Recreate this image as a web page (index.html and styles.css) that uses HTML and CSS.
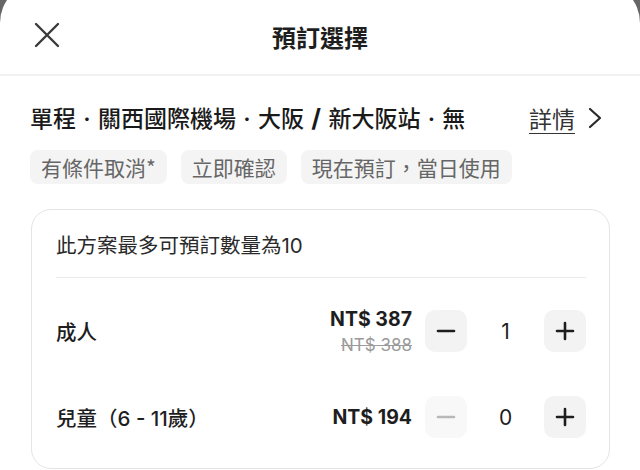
FILE: index.html
```html
<!DOCTYPE html>
<html lang="zh-Hant">
<head>
<meta charset="utf-8">
<link rel="stylesheet" href="styles.css">
</head>
<body>
<div class="sheet">
  <header class="header">
    <button class="close" aria-label="關閉">
      <svg width="26" height="26" viewBox="0 0 26 26"><path d="M2 2 L24 24 M24 2 L2 24" stroke="#3a3a3a" stroke-width="2.4" stroke-linecap="round" fill="none"/></svg>
    </button>
    <h1 class="title">預訂選擇</h1>
  </header>
  <section class="content">
    <div class="route-row">
      <div class="route">單程<span class="sep"> · </span>關西國際機場<span class="sep"> · </span>大阪<span class="sep slash"> / </span>新大阪站<span class="sep"> · </span>無</div>
      <a class="details">詳情<svg class="chev" width="16" height="24" viewBox="0 0 16 24"><path d="M3 3 L13 12 L3 21" stroke="#2a2a2a" stroke-width="2.2" fill="none" stroke-linecap="round" stroke-linejoin="round"/></svg></a>
    </div>
    <div class="tags">
      <span class="tag">有條件取消*</span>
      <span class="tag">立即確認</span>
      <span class="tag">現在預訂，當日使用</span>
    </div>
    <div class="card">
      <div class="notice">此方案最多可預訂數量為10</div>
      <div class="divider"></div>
      <div class="row">
        <div class="label">成人</div>
        <div class="price">
          <div class="now">NT$ 387</div>
          <div class="was">NT$ 388</div>
        </div>
        <div class="stepper">
          <button class="step"><svg width="20" height="20" viewBox="0 0 20 20"><path d="M2 10 H18" stroke="#1e1e1e" stroke-width="2.6" stroke-linecap="round"/></svg></button>
          <span class="count">1</span>
          <button class="step"><svg width="20" height="20" viewBox="0 0 20 20"><path d="M2 10 H18 M10 2 V18" stroke="#1e1e1e" stroke-width="2.6" stroke-linecap="round"/></svg></button>
        </div>
      </div>
      <div class="row">
        <div class="label">兒童（6 - 11歲）</div>
        <div class="price">
          <div class="now">NT$ 194</div>
        </div>
        <div class="stepper">
          <button class="step disabled"><svg width="20" height="20" viewBox="0 0 20 20"><path d="M2 10 H18" stroke="#b8b8b8" stroke-width="2.6" stroke-linecap="round"/></svg></button>
          <span class="count">0</span>
          <button class="step"><svg width="20" height="20" viewBox="0 0 20 20"><path d="M2 10 H18 M10 2 V18" stroke="#1e1e1e" stroke-width="2.6" stroke-linecap="round"/></svg></button>
        </div>
      </div>
    </div>
  </section>
</div>
</body>
</html>
```
FILE: styles.css
```css
* { box-sizing: border-box; }
html, body { margin: 0; padding: 0; }
body {
  background: #666666;
  font-family: "Noto Sans CJK TC", "Noto Sans", sans-serif;
  color: #1f1f1f;
  width: 640px;
  height: 470px;
  overflow: hidden;
}
.sheet {
  margin-top: -18px;
  background: #ffffff;
  border-radius: 41px 41px 0 0;
  height: 488px;
}
.header {
  height: 94px;
  padding-top: 18px;
  display: flex;
  align-items: center;
  justify-content: center;
  position: relative;
  border-bottom: 2px solid #f1f1f1;
}
.close {
  position: absolute;
  left: 34px;
  top: 40px;
  width: 26px;
  height: 26px;
  padding: 0;
  border: none;
  background: none;
  display: flex;
}
.title {
  margin: 0;
  font-size: 24px;
  font-weight: 700;
  line-height: 32px;
  color: #1e1e1e;
}
.content {
  padding: 0 30px 0 30px;
}
.route-row {
  display: flex;
  align-items: center;
  justify-content: space-between;
  height: 34px;
  margin-top: 25px;
}
.route {
  font-size: 23px;
  font-weight: 500;
  line-height: 34px;
  color: #1a1a1a;
  white-space: nowrap;
}
.sep {
  font-family: "Inter", "Noto Sans", sans-serif;
  font-weight: 600;
  white-space: pre;
  padding: 0 1.5px;
}
.slash { font-weight: 700; font-size: 25px; }
.details {
  display: flex;
  align-items: center;
  font-size: 23px;
  line-height: 34px;
  color: #333;
  text-decoration: underline;
  text-decoration-thickness: 1px;
  text-underline-offset: 5px;
  margin-right: 7px;
}
.chev { margin-left: 12px; }
.tags {
  display: flex;
  gap: 14px;
  margin-top: 15px;
}
.tag {
  background: #f4f4f4;
  color: #666666;
  font-size: 21px;
  line-height: 34px;
  height: 34px;
  padding: 0 11px;
  border-radius: 8px;
}
.card {
  margin-top: 25px;
  margin-left: 1px;
  width: 579px;
  border: 1px solid #e4e4e4;
  border-radius: 20px;
  padding: 0 23px 8px 24px;
}
.notice {
  height: 67px;
  display: flex;
  align-items: center;
  font-family: "Inter", "Noto Sans CJK TC", sans-serif;
  font-size: 20.5px;
  color: #2a2a2a;
}
.divider {
  height: 1px;
  background: #ececec;
  margin-bottom: 10px;
}
.row {
  height: 86px;
  display: flex;
  align-items: center;
}
.label {
  flex: 1;
  font-family: "Inter", "Noto Sans CJK TC", sans-serif;
  font-size: 20.5px;
  font-weight: 500;
  color: #1e1e1e;
}
.price {
  text-align: right;
  font-family: "Inter", "Noto Sans", sans-serif;
}
.now {
  font-size: 19.5px;
  font-weight: 700;
  line-height: 28px;
  color: #1e1e1e;
}
.was {
  font-size: 17px;
  line-height: 24px;
  color: #9a9a9a;
  text-decoration: line-through;
}
.stepper {
  display: flex;
  align-items: center;
  margin-left: 13px;
}
.step {
  width: 42px;
  height: 42px;
  border: none;
  border-radius: 10px;
  background: #f3f3f3;
  display: flex;
  align-items: center;
  justify-content: center;
  padding: 0;
}
.step.disabled { background: #f8f8f8; }
.count {
  width: 77px;
  text-align: center;
  font-family: "Inter", "Noto Sans", sans-serif;
  font-size: 21px;
  color: #1e1e1e;
}
```
